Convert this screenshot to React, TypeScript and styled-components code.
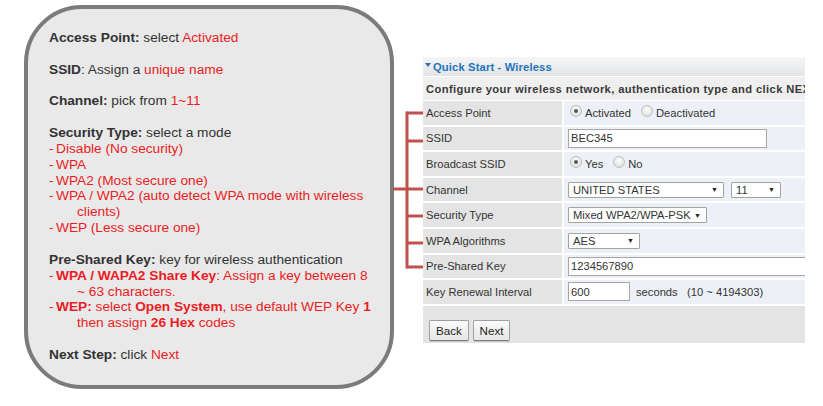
import React from "react";
import styled, { createGlobalStyle } from "styled-components";

const GlobalStyle = createGlobalStyle`
  html, body { margin: 0; padding: 0; background: #ffffff; }
  body { font-family: "Liberation Sans", Arial, sans-serif; }
  * { box-sizing: border-box; }
`;

const Page = styled.div`
  display: flex;
  align-items: flex-start;
  padding: 5px 0 0 24px;
  width: 823px;
  height: 406px;
  overflow: hidden;
`;

/* ---------- left guide card ---------- */
const Card = styled.div`
  flex: 0 0 370px;
  height: 384px;
  border: 4px solid #7b7b7b;
  border-radius: 58px;
  background: #e9e9e9;
  padding: 21px 12px 0 21px;
  font-size: 13.7px;
  line-height: 15.85px;
  color: #333333;
`;

const Para = styled.div`
  margin-bottom: 15.85px;
`;

const Strong = styled.b<{ $red?: boolean }>`
  font-weight: bold;
  color: ${(p) => (p.$red ? "#ec1c24" : "#333333")};
`;

const Red = styled.span`
  color: #ec1c24;
`;

const Item = styled.div`
  color: #ec1c24;
  padding-left: 28px;
  text-indent: -28px;
`;

const Dash = styled.span`
  display: inline-block;
  width: 7px;
  text-indent: 0;
`;

/* ---------- bracket drawing ---------- */
const Bracket = styled.svg`
  flex: 0 0 29px;
  margin-top: 95px;
  overflow: visible;
`;

/* ---------- right router panel ---------- */
const Panel = styled.div`
  flex: 0 0 382px;
  width: 382px;
  margin-top: 52px;
  overflow: hidden;
  font-size: 11.2px;
  color: #333333;
`;

const PanelHeader = styled.div`
  height: 19px;
  margin-bottom: 1px;
  display: flex;
  align-items: center;
  gap: 2px;
  padding-left: 2px;
  background: linear-gradient(#f6f6f6, #e2e4e6);
  color: #1f74bd;
  font-weight: bold;
  letter-spacing: 0.15px;
  white-space: nowrap;
`;

const Caret = styled.span`
  width: 0;
  height: 0;
  border-left: 3px solid transparent;
  border-right: 3px solid transparent;
  border-top: 4px solid #1f74bd;
  margin-top: -3px;
`;

const Intro = styled.div`
  height: 23px;
  margin-bottom: 1px;
  display: flex;
  align-items: center;
  padding-left: 3px;
  background: #efefef;
  font-weight: bold;
  letter-spacing: 0.38px;
  white-space: nowrap;
  color: #3a3a3a;
`;

const Rows = styled.div`
  display: flex;
  flex-direction: column;
  gap: 2px;
`;

const Row = styled.div`
  display: grid;
  grid-template-columns: 139px 1fr;
  column-gap: 2px;
  height: 23.6px;
`;

const Label = styled.div`
  background: #e4e4e4;
  display: flex;
  align-items: center;
  padding-left: 3px;
  white-space: nowrap;
`;

const Value = styled.div`
  background: #edf1f7;
  display: flex;
  align-items: center;
  padding-left: 4px;
  white-space: nowrap;
`;

const RadioGroup = styled.label`
  display: inline-flex;
  align-items: center;
  gap: 3px;
  margin-left: 2px;
  margin-right: 8px;
`;

const Radio = styled.span<{ $checked?: boolean }>`
  position: relative;
  width: 12px;
  height: 12px;
  border-radius: 50%;
  border: 1px solid #bdbdbd;
  background: radial-gradient(circle at 50% 35%, #ffffff, #d8d8d8);
  margin-top: -3px;
  &::after {
    content: "";
    display: ${(p) => (p.$checked ? "block" : "none")};
    position: absolute;
    left: 3px;
    top: 3px;
    width: 4px;
    height: 4px;
    border-radius: 50%;
    background: #555555;
  }
`;

const TextInput = styled.input<{ $w: number }>`
  width: ${(p) => p.$w}px;
  flex: 0 0 ${(p) => p.$w}px;
  height: 19px;
  border: 1px solid #a7a7a7;
  background: #ffffff;
  font-family: "Liberation Sans", Arial, sans-serif;
  font-size: 11.2px;
  color: #333333;
  padding: 0 2px;
  outline: none;
`;

const Select = styled.div<{ $w: number }>`
  width: ${(p) => p.$w}px;
  flex: 0 0 ${(p) => p.$w}px;
  height: 16px;
  border: 1px solid #a3a3a3;
  border-radius: 1px;
  background: #ffffff;
  display: inline-flex;
  align-items: center;
  justify-content: space-between;
  padding: 0 5px 0 4px;
  margin-right: 7px;
`;

const Arrow = styled.span`
  font-size: 7px;
  color: #222222;
`;

const Note = styled.span`
  margin-left: 6px;
  white-space: pre;
`;

const Footer = styled.div`
  height: 37px;
  margin-top: 2px;
  background: #e4e4e4;
  display: flex;
  align-items: flex-start;
  gap: 4px;
  padding: 14px 0 0 6px;
`;

const Button = styled.button<{ $w: number }>`
  width: ${(p) => p.$w}px;
  height: 21px;
  border: 1px solid #a0a0a0;
  border-bottom-color: #7d7d7d;
  border-radius: 2px;
  background: linear-gradient(#fbfbfb, #e6e6e6);
  font-family: "Liberation Sans", Arial, sans-serif;
  font-size: 11.6px;
  color: #222222;
  padding: 0;
  box-shadow: 0 1px 0 #c4c4c4;
`;

const SelectBox = ({ w, children }: { w: number; children: React.ReactNode }) => (
  <Select $w={w}>
    <span>{children}</span>
    <Arrow>▼</Arrow>
  </Select>
);

export default function App() {
  const branches = [13, 41, 89, 116, 143, 167];
  return (
    <>
      <GlobalStyle />
      <Page>
        <Card>
          <Para>
            <Strong>Access Point:</Strong> select <Red>Activated</Red>
          </Para>
          <Para>
            <Strong>SSID</Strong>: Assign a <Red>unique name</Red>
          </Para>
          <Para>
            <Strong>Channel:</Strong> pick from <Red>1~11</Red>
          </Para>
          <Para>
            <div>
              <Strong>Security Type:</Strong> select a mode
            </div>
            <Item><Dash>-</Dash>Disable (No security)</Item>
            <Item><Dash>-</Dash>WPA</Item>
            <Item><Dash>-</Dash>WPA2 (Most secure one)</Item>
            <Item><Dash>-</Dash>WPA / WPA2 (auto detect WPA mode with wireless clients)</Item>
            <Item><Dash>-</Dash>WEP (Less secure one)</Item>
          </Para>
          <Para>
            <div>
              <Strong>Pre-Shared Key:</Strong> key for wireless authentication
            </div>
            <Item>
              <Dash>-</Dash>
              <Strong $red>WPA / WAPA2 Share Key</Strong>: Assign a key between 8 ~ 63 characters.
            </Item>
            <Item>
              <Dash>-</Dash>
              <Strong $red>WEP:</Strong> select <Strong $red>Open System</Strong>, use default WEP Key{" "}
              <Strong $red>1</Strong> then assign <Strong $red>26 Hex</Strong> codes
            </Item>
          </Para>
          <Para>
            <Strong>Next Step:</Strong> click <Red>Next</Red>
          </Para>
        </Card>

        <Bracket width="29" height="175" viewBox="0 0 29 175">
          <g stroke="#c0504d" strokeWidth="3" fill="none">
            <line x1="13" y1="11.5" x2="13" y2="168.5" />
            <line x1="-1" y1="89" x2="13" y2="89" />
            {branches.map((y) => (
              <line key={y} x1="13" y1={y} x2="29" y2={y} />
            ))}
          </g>
        </Bracket>

        <Panel>
          <PanelHeader>
            <Caret />
            Quick Start - Wireless
          </PanelHeader>
          <Intro>Configure your wireless network, authentication type and click NEXT.</Intro>
          <Rows>
            <Row>
              <Label>Access Point</Label>
              <Value>
                <RadioGroup>
                  <Radio $checked />
                  Activated
                </RadioGroup>
                <RadioGroup>
                  <Radio />
                  Deactivated
                </RadioGroup>
              </Value>
            </Row>
            <Row>
              <Label>SSID</Label>
              <Value>
                <TextInput $w={199} readOnly value="BEC345" />
              </Value>
            </Row>
            <Row>
              <Label>Broadcast SSID</Label>
              <Value>
                <RadioGroup>
                  <Radio $checked />
                  Yes
                </RadioGroup>
                <RadioGroup>
                  <Radio />
                  No
                </RadioGroup>
              </Value>
            </Row>
            <Row>
              <Label>Channel</Label>
              <Value>
                <SelectBox w={156}>UNITED STATES</SelectBox>
                <SelectBox w={50}>11</SelectBox>
              </Value>
            </Row>
            <Row>
              <Label>Security Type</Label>
              <Value>
                <SelectBox w={139}>Mixed WPA2/WPA-PSK</SelectBox>
              </Value>
            </Row>
            <Row>
              <Label>WPA Algorithms</Label>
              <Value>
                <SelectBox w={72}>AES</SelectBox>
              </Value>
            </Row>
            <Row>
              <Label>Pre-Shared Key</Label>
              <Value>
                <TextInput $w={260} readOnly value="1234567890" />
              </Value>
            </Row>
            <Row>
              <Label>Key Renewal Interval</Label>
              <Value>
                <TextInput $w={62} readOnly value="600" />
                <Note>{"seconds   (10 ~ 4194303)"}</Note>
              </Value>
            </Row>
          </Rows>
          <Footer>
            <Button $w={40}>Back</Button>
            <Button $w={37}>Next</Button>
          </Footer>
        </Panel>
      </Page>
    </>
  );
}
